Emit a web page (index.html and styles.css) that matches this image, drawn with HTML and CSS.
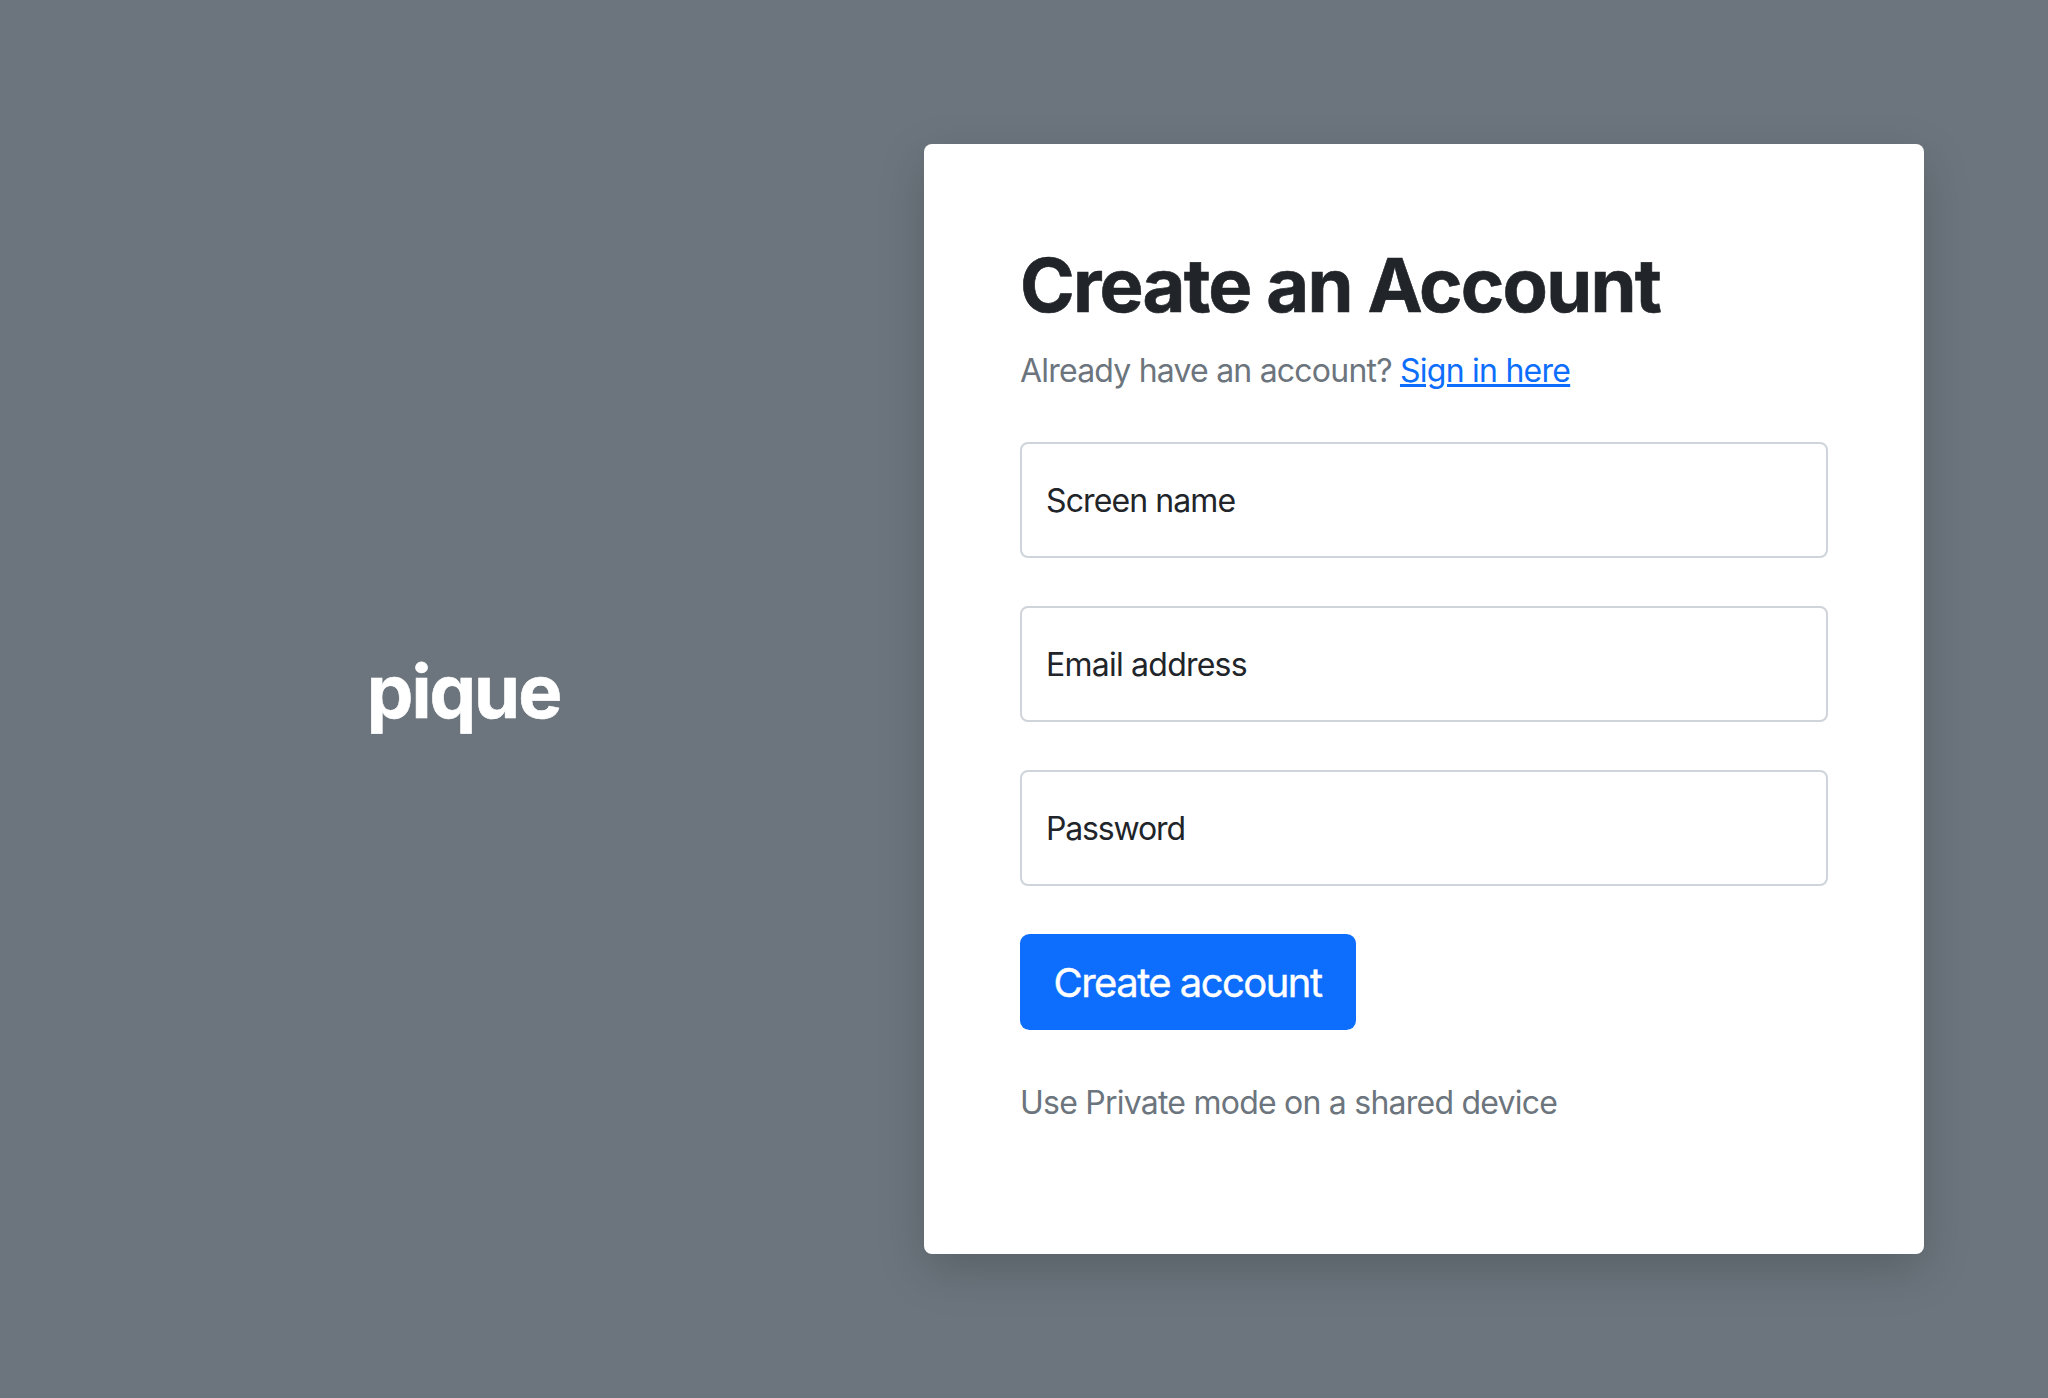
FILE: index.html
```html
<!DOCTYPE html>
<html lang="en">
<head>
<meta charset="utf-8">
<title>Create an Account - pique</title>
<link rel="stylesheet" href="styles.css">
</head>
<body>
<main class="page">
  <div class="brand"><span class="brand-name">pique</span></div>
  <section class="card">
    <h1 class="title">Create an Account</h1>
    <p class="note signin">Already have an account? <a href="#">Sign in here</a></p>
    <form class="form">
      <label class="field field-name">Screen name</label>
      <label class="field">Email address</label>
      <label class="field field-password">Password</label>
      <button class="submit" type="button">Create account</button>
    </form>
    <p class="note">Use Private mode on a shared device</p>
  </section>
</main>
</body>
</html>
```
FILE: styles.css
```css
* {
  box-sizing: border-box;
}

body {
  margin: 0;
  background: #6c757d;
  color: #212529;
  font-family: Inter, "Liberation Sans", sans-serif;
  font-size: 32px;
  line-height: 48px;
  letter-spacing: -0.77px;
}

.page {
  display: grid;
  grid-template-columns: 924px 1000px;
  height: 1398px;
  padding: 144px 0;
}

.brand {
  display: flex;
  align-items: center;
  justify-content: center;
  padding: 0 0 16px 3px;
  color: #fff;
}

.brand-name,
.title {
  font-size: 74px;
  font-weight: 700;
  line-height: 90px;
  -webkit-text-stroke: 0.6px currentColor;
}

.brand-name {
  letter-spacing: -2px;
}

.card {
  padding: 96px;
  background: #fff;
  border-radius: 8px;
  box-shadow: 0 16px 48px rgba(0, 0, 0, 0.176);
}

.title {
  margin: 0 0 17px;
  letter-spacing: -1.8px;
}

.note {
  margin: 0;
  color: #6c757d;
}

.signin {
  margin-bottom: 47px;
  letter-spacing: -0.79px;
}

.signin a {
  color: #0d6efd;
  letter-spacing: -0.75px;
  text-decoration-thickness: 3px;
  text-underline-offset: 2px;
}

.form {
  display: flex;
  flex-direction: column;
  align-items: flex-start;
  gap: 48px;
  margin-bottom: 49px;
}

.field {
  display: flex;
  align-items: center;
  width: 100%;
  height: 116px;
  padding: 2px 24px 0;
  border: 2px solid #ced4da;
  border-radius: 8px;
}

.field-name {
  letter-spacing: -0.9px;
}

.field-password {
  letter-spacing: -1.15px;
}

.submit {
  width: 336px;
  height: 96px;
  padding: 0 1px 0 0;
  border: 0;
  border-radius: 9.6px;
  background: #0d6efd;
  color: #fff;
  font-family: inherit;
  font-size: 40px;
  letter-spacing: -1.55px;
  -webkit-text-stroke: 0.4px currentColor;
}
```
